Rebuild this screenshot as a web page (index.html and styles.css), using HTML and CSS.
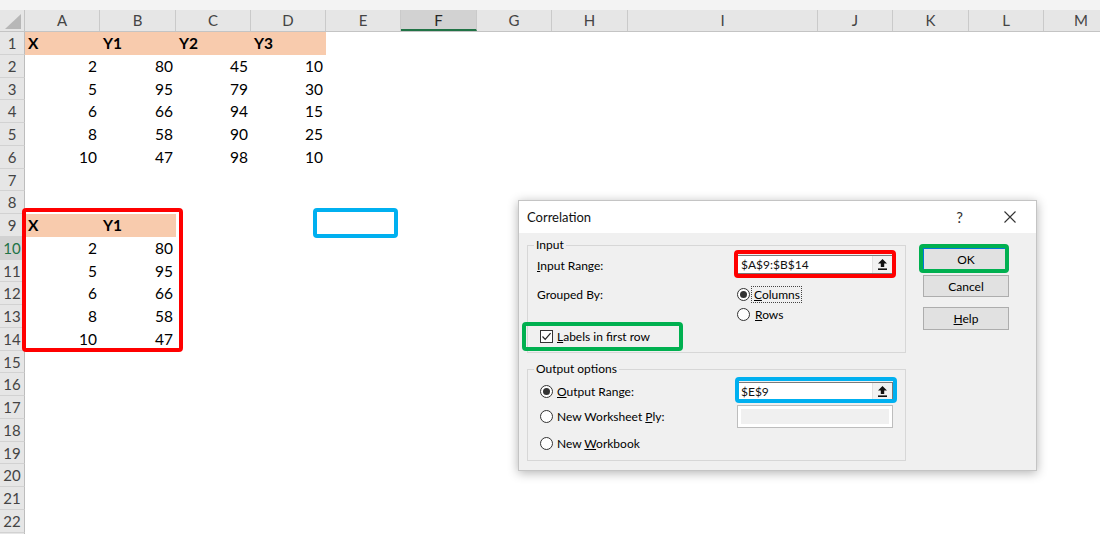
FILE: index.html
```html
<!DOCTYPE html>
<html lang="en">
<head>
    <meta charset="UTF-8">
    <title>Correlation</title>
    <link rel="stylesheet" href="styles.css">
</head>
<body>
    <!-- worksheet -->
    <div class="sheet">
        <div class="colhead">
            <div class="corner">
                <svg width="16" height="15" viewBox="0 0 16 15"><polygon points="16,0 16,15 0,15" fill="#b7b7b7"/></svg>
            </div>
            <div class="ch ca">A</div>
            <div class="ch cb">B</div>
            <div class="ch cc">C</div>
            <div class="ch cd">D</div>
            <div class="ch ce">E</div>
            <div class="ch cf sel">F</div>
            <div class="ch cg">G</div>
            <div class="ch chh">H</div>
            <div class="ch ci">I</div>
            <div class="ch cj">J</div>
            <div class="ch ck">K</div>
            <div class="ch cl">L</div>
            <div class="ch cm">M</div>
        </div>

        <div class="row"><div class="rh">1</div><div class="cell ca fill b">X</div><div class="cell cb fill b">Y1</div><div class="cell cc fill b">Y2</div><div class="cell cd fill b">Y3</div></div>
        <div class="row"><div class="rh">2</div><div class="cell ca r">2</div><div class="cell cb r">80</div><div class="cell cc r">45</div><div class="cell cd r">10</div></div>
        <div class="row"><div class="rh">3</div><div class="cell ca r">5</div><div class="cell cb r">95</div><div class="cell cc r">79</div><div class="cell cd r">30</div></div>
        <div class="row"><div class="rh">4</div><div class="cell ca r">6</div><div class="cell cb r">66</div><div class="cell cc r">94</div><div class="cell cd r">15</div></div>
        <div class="row"><div class="rh">5</div><div class="cell ca r">8</div><div class="cell cb r">58</div><div class="cell cc r">90</div><div class="cell cd r">25</div></div>
        <div class="row"><div class="rh">6</div><div class="cell ca r">10</div><div class="cell cb r">47</div><div class="cell cc r">98</div><div class="cell cd r">10</div></div>
        <div class="row"><div class="rh">7</div></div>
        <div class="row"><div class="rh">8</div></div>
        <div class="row"><div class="rh">9</div><div class="cell ca fill b">X</div><div class="cell cb fill b">Y1</div></div>
        <div class="row"><div class="rh sel">10</div><div class="cell ca r">2</div><div class="cell cb r">80</div></div>
        <div class="row"><div class="rh">11</div><div class="cell ca r">5</div><div class="cell cb r">95</div></div>
        <div class="row"><div class="rh">12</div><div class="cell ca r">6</div><div class="cell cb r">66</div></div>
        <div class="row"><div class="rh">13</div><div class="cell ca r">8</div><div class="cell cb r">58</div></div>
        <div class="row"><div class="rh">14</div><div class="cell ca r">10</div><div class="cell cb r">47</div></div>
        <div class="row"><div class="rh">15</div></div>
        <div class="row"><div class="rh">16</div></div>
        <div class="row"><div class="rh">17</div></div>
        <div class="row"><div class="rh">18</div></div>
        <div class="row"><div class="rh">19</div></div>
        <div class="row"><div class="rh">20</div></div>
        <div class="row"><div class="rh">21</div></div>
        <div class="row"><div class="rh">22</div></div>
        <div class="row"><div class="rh"></div></div>
    </div>

    <!-- Analysis ToolPak dialog -->
    <div class="dialog">
        <div class="titlebar">
            <span class="title">Correlation</span>
            <span class="q">?</span>
            <svg class="close" width="12" height="12" viewBox="0 0 12 12"><path d="M0.5 0.5 L11.5 11.5 M11.5 0.5 L0.5 11.5" stroke="#333" stroke-width="1.1"/></svg>
        </div>
        <div class="dlg-body">
            <div class="groups">
                <fieldset class="group group-input">
                    <legend>Input</legend>
                    <div class="line">
                        <span class="lbl"><u>I</u>nput Range:</span>
                        <div class="ref">
                            <span class="ref-text">$A$9:$B$14</span>
                            <span class="ref-btn"><svg width="9" height="11" viewBox="0 0 9 11"><path d="M4.5 0 L9 4.5 H6.2 V8 H2.8 V4.5 H0 Z" fill="#111"/><rect x="0" y="9.4" width="9" height="1.6" fill="#111"/></svg></span>
                        </div>
                    </div>
                    <div class="line line-grouped">
                        <span class="lbl lbl-top">Grouped By:</span>
                        <div class="opts">
                            <div class="opt"><span class="radio on"></span><span class="focus"><u>C</u>olumns</span></div>
                            <div class="opt"><span class="radio"></span><span class="opt-text"><u>R</u>ows</span></div>
                        </div>
                    </div>
                    <div class="check-line">
                        <span class="check"><svg width="11" height="11" viewBox="0 0 11 11"><polyline points="1.5,5.5 4.2,8.3 9.6,2.2" fill="none" stroke="#222" stroke-width="1.2"/></svg></span>
                        <span><u>L</u>abels in first row</span>
                    </div>
                </fieldset>

                <fieldset class="group group-output">
                    <legend>Output options</legend>
                    <div class="out-line">
                        <div class="out-opt"><span class="radio on"></span><span><u>O</u>utput Range:</span></div>
                        <div class="ref">
                            <span class="ref-text">$E$9</span>
                            <span class="ref-btn"><svg width="9" height="11" viewBox="0 0 9 11"><path d="M4.5 0 L9 4.5 H6.2 V8 H2.8 V4.5 H0 Z" fill="#111"/><rect x="0" y="9.4" width="9" height="1.6" fill="#111"/></svg></span>
                        </div>
                    </div>
                    <div class="out-line out-line-ply">
                        <div class="out-opt"><span class="radio"></span><span>New Worksheet <u>P</u>ly:</span></div>
                        <div class="ref ref-off"></div>
                    </div>
                    <div class="out-line out-line-book">
                        <div class="out-opt"><span class="radio"></span><span>New <u>W</u>orkbook</span></div>
                    </div>
                </fieldset>
            </div>

            <div class="buttons">
                <button class="btn btn-default">OK</button>
                <button class="btn">Cancel</button>
                <button class="btn btn-help"><u>H</u>elp</button>
            </div>
        </div>
    </div>

    <!-- highlight boxes drawn over the screenshot -->
    <div class="mark mark-red mark-range"></div>
    <div class="mark mark-blue mark-target"></div>
    <div class="mark mark-red mark-input"></div>
    <div class="mark mark-green mark-labels"></div>
    <div class="mark mark-green mark-ok"></div>
    <div class="mark mark-blue mark-output"></div>
</body>
</html>
```

FILE: styles.css
```css
* {
    box-sizing: border-box;
}

body {
    margin: 0;
    width: 1100px;
    height: 534px;
    overflow: hidden;
    position: relative;
    background: #fff;
    font-family: Lato, "Liberation Sans", sans-serif;
    color: #000;
}

/* Worksheet */
.sheet {
    font-size: 15.5px;
}

.colhead {
    display: flex;
    height: 32px;
    padding-top: 10px;
    background: #f3f3f3;
    border-bottom: 1px solid #c4c4c4;
}

.corner {
    width: 25px;
    flex: none;
    display: flex;
    align-items: flex-end;
    justify-content: flex-end;
    padding: 0 3px 2px 0;
    background: #e6e6e6;
    border-right: 1px solid #c4c4c4;
}

.ch {
    flex: none;
    height: 21px;
    line-height: 21px;
    text-align: center;
    font-size: 15px;
    color: #444;
    background: #e6e6e6;
    border-right: 1px solid #cacaca;
}

.ch.sel {
    background: #d2d2d2;
    color: #262626;
    border-bottom: 2px solid #217346;
    line-height: 20px;
}

.ca { width: 75px; }
.cb { width: 76px; }
.cc { width: 75px; }
.cd { width: 75px; }
.ce { width: 75px; }
.cf { width: 76px; }
.cg { width: 75px; }
.chh { width: 76px; }
.ci { width: 190px; }
.cj { width: 75px; }
.ck { width: 76px; }
.cl { width: 75px; }
.cm { width: 75px; }

.row {
    display: flex;
    height: 22.75px;
}

.rh {
    width: 25px;
    flex: none;
    line-height: 22px;
    text-align: center;
    font-size: 15px;
    color: #444;
    background: #e6e6e6;
    border-right: 1px solid #bdbdbd;
    border-bottom: 1px solid #d2d2d2;
}

.rh.sel {
    background: #d2d2d2;
    color: #217346;
}

.cell {
    flex: none;
    line-height: 22.75px;
    padding: 0 3px;
    white-space: nowrap;
}

.cell.fill {
    background: #f8cbad;
}

.cell.b {
    font-weight: 700;
}

.cell.r {
    text-align: right;
}

/* Dialog */
.dialog {
    position: absolute;
    left: 518px;
    top: 200px;
    width: 519px;
    height: 271px;
    background: #f0f0f0;
    border: 1px solid #c4c4c4;
    box-shadow: 0 2px 10px rgba(0, 0, 0, 0.3);
    font-size: 12px;
}

.titlebar {
    display: flex;
    align-items: center;
    height: 32px;
    padding: 0 20px 0 8px;
    background: #fff;
}

.title {
    flex: 1;
    font-size: 13px;
    color: #111;
}

.q {
    font-size: 15px;
    color: #333;
    margin-right: 41px;
}

.dlg-body {
    display: flex;
    gap: 17px;
    padding: 5px 0 0 8px;
}

.groups {
    width: 379px;
}

.group {
    margin: 0;
    padding: 3px 0 0 9px;
    border: 1px solid #d7d7d7;
    min-width: 0;
}

.group legend {
    margin-left: -3px;
    padding: 0 2px;
    line-height: 14px;
}

.group-input {
    height: 115px;
}

.group-output {
    height: 99px;
    margin-top: 9px;
    padding-top: 6px;
}

.line {
    display: flex;
    align-items: center;
    height: 19px;
}

.lbl {
    width: 200px;
    flex: none;
    padding-top: 1px;
}

.line-grouped {
    align-items: flex-start;
    height: auto;
    margin-top: 10px;
}

.lbl-top {
    padding-top: 3px;
}

.opts {
    display: flex;
    flex-direction: column;
}

.opt {
    display: flex;
    align-items: center;
    gap: 2px;
    height: 20px;
}

.opt-text {
    padding-left: 3px;
}

.focus {
    outline: 1px dotted #444;
    padding: 0 1px 0 2px;
    line-height: 15px;
}

.radio {
    width: 13px;
    height: 13px;
    flex: none;
    display: inline-flex;
    align-items: center;
    justify-content: center;
    border: 1px solid #333;
    border-radius: 50%;
    background: #fff;
}

.radio.on::after {
    content: "";
    width: 7px;
    height: 7px;
    border-radius: 50%;
    background: #333;
}

.check-line {
    display: flex;
    align-items: center;
    gap: 4px;
    height: 19px;
    margin-top: 3px;
    padding-left: 3px;
}

.check {
    width: 13px;
    height: 13px;
    display: flex;
    align-items: center;
    justify-content: center;
    border: 1px solid #333;
    background: #fff;
}

.ref {
    display: flex;
    align-items: stretch;
    width: 156px;
    height: 19px;
    background: #fff;
    border: 1px solid #7a7a7a;
}

.ref-text {
    flex: 1;
    padding-left: 3px;
    line-height: 17px;
    color: #111;
}

.ref-btn {
    width: 20px;
    display: flex;
    align-items: center;
    justify-content: center;
    background: #f2f2f2;
    border-left: 1px solid #e2e2e2;
}

.ref-off {
    height: 23px;
    background: #f0f0f0;
    border-color: #bdbdbd;
    box-shadow: inset 0 0 0 3px #fff;
}

.out-line {
    display: flex;
    align-items: center;
    height: 19px;
}

.out-opt {
    width: 200px;
    flex: none;
    display: flex;
    align-items: center;
    gap: 4px;
    padding-left: 3px;
}

.out-line-ply {
    height: 23px;
    margin-top: 4px;
}

.out-line-book {
    height: 20px;
    margin-top: 5px;
}

.buttons {
    display: flex;
    flex-direction: column;
    width: 86px;
    padding-top: 10px;
}

.btn {
    width: 86px;
    height: 22px;
    padding: 0;
    font-family: Lato, "Liberation Sans", sans-serif;
    font-size: 12px;
    color: #000;
    background: #e1e1e1;
    border: 1px solid #adadad;
}

.btn + .btn {
    margin-top: 5px;
}

.btn-default {
    border-color: #0078d7;
}

.btn.btn-help {
    margin-top: 10px;
    height: 23px;
}

/* Highlight boxes */
.mark {
    position: absolute;
    border: 4px solid;
    border-radius: 4px;
}

.mark-red { border-color: #ff0000; }
.mark-blue { border-color: #00b0f0; }
.mark-green { border-color: #00b050; }

.mark-range { left: 22px; top: 208px; width: 161px; height: 144px; }
.mark-target { left: 313px; top: 208px; width: 85px; height: 30px; }
.mark-input { left: 734px; top: 250px; width: 162px; height: 28px; }
.mark-labels { left: 522px; top: 322px; width: 161px; height: 29px; }
.mark-ok { left: 919px; top: 244px; width: 90px; height: 29px; }
.mark-output { left: 735px; top: 377px; width: 162px; height: 26px; }
```
